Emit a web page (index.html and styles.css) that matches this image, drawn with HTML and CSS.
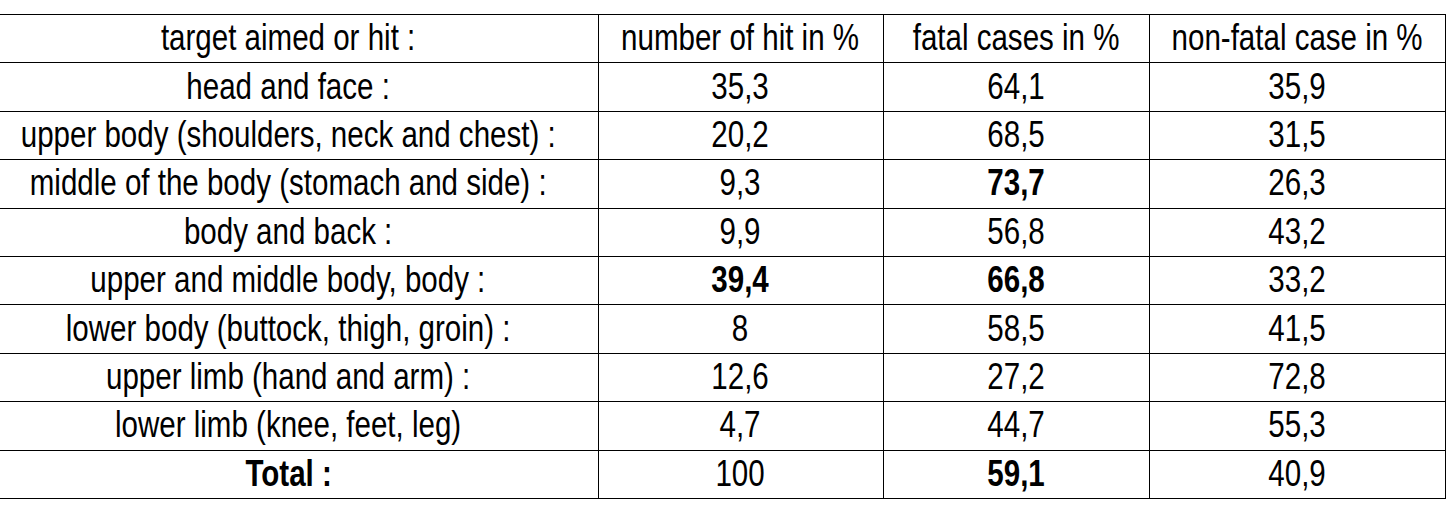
FILE: index.html
```html
<!DOCTYPE html>
<html>
<head>
<meta charset="utf-8">
<link rel="stylesheet" href="styles.css">
</head>
<body>
<table class="stats">
  <colgroup>
    <col class="c1"><col class="c2"><col class="c3"><col class="c4">
  </colgroup>
  <tr><td><div class="cell"><span class="t">target aimed or hit :</span></div></td><td><div class="cell"><span class="t">number of hit in %</span></div></td><td><div class="cell"><span class="t">fatal cases in %</span></div></td><td><div class="cell"><span class="t">non-fatal case in %</span></div></td></tr>
  <tr><td><div class="cell"><span class="t">head and face :</span></div></td><td><div class="cell"><span class="t">35,3</span></div></td><td><div class="cell"><span class="t">64,1</span></div></td><td><div class="cell"><span class="t">35,9</span></div></td></tr>
  <tr><td><div class="cell"><span class="t">upper body (shoulders, neck and chest) :</span></div></td><td><div class="cell"><span class="t">20,2</span></div></td><td><div class="cell"><span class="t">68,5</span></div></td><td><div class="cell"><span class="t">31,5</span></div></td></tr>
  <tr><td><div class="cell"><span class="t">middle of the body (stomach and side) :</span></div></td><td><div class="cell"><span class="t">9,3</span></div></td><td><div class="cell"><span class="t b">73,7</span></div></td><td><div class="cell"><span class="t">26,3</span></div></td></tr>
  <tr><td><div class="cell"><span class="t">body and back :</span></div></td><td><div class="cell"><span class="t">9,9</span></div></td><td><div class="cell"><span class="t">56,8</span></div></td><td><div class="cell"><span class="t">43,2</span></div></td></tr>
  <tr><td><div class="cell"><span class="t">upper and middle body, body :</span></div></td><td><div class="cell"><span class="t b">39,4</span></div></td><td><div class="cell"><span class="t b">66,8</span></div></td><td><div class="cell"><span class="t">33,2</span></div></td></tr>
  <tr><td><div class="cell"><span class="t">lower body (buttock, thigh, groin) :</span></div></td><td><div class="cell"><span class="t">8</span></div></td><td><div class="cell"><span class="t">58,5</span></div></td><td><div class="cell"><span class="t">41,5</span></div></td></tr>
  <tr><td><div class="cell"><span class="t">upper limb (hand and arm) :</span></div></td><td><div class="cell"><span class="t">12,6</span></div></td><td><div class="cell"><span class="t">27,2</span></div></td><td><div class="cell"><span class="t">72,8</span></div></td></tr>
  <tr><td><div class="cell"><span class="t">lower limb (knee, feet, leg)</span></div></td><td><div class="cell"><span class="t">4,7</span></div></td><td><div class="cell"><span class="t">44,7</span></div></td><td><div class="cell"><span class="t">55,3</span></div></td></tr>
  <tr><td><div class="cell"><span class="t b">Total :</span></div></td><td><div class="cell"><span class="t">100</span></div></td><td><div class="cell"><span class="t b">59,1</span></div></td><td><div class="cell"><span class="t">40,9</span></div></td></tr>
</table>
</body>
</html>
```
FILE: styles.css
```css
html, body {
  margin: 0;
  padding: 0;
  background: #fff;
}
body {
  padding-top: 14px;
  font-family: "Liberation Sans", Arial, sans-serif;
  color: #000;
}
.stats {
  border-collapse: collapse;
  table-layout: fixed;
  width: 1445px;
}
.c1 { width: 598px; }
.c2 { width: 285px; }
.c3 { width: 266px; }
.c4 { width: 296px; }
.stats td {
  border: 1px solid #000;
  height: 47.4px;
  padding: 0;
  vertical-align: middle;
}
.stats tr td:first-child {
  border-left: none;
  padding-right: 21px;
}
.cell {
  display: flex;
  justify-content: center;
  align-items: center;
  overflow: visible;
}
.t {
  flex: none;
  display: inline-block;
  font-size: 36px;
  line-height: 1;
  white-space: nowrap;
  transform: scaleX(0.82);
  transform-origin: center;
  margin-top: -1px;
}
.t.b {
  font-weight: bold;
}
```
